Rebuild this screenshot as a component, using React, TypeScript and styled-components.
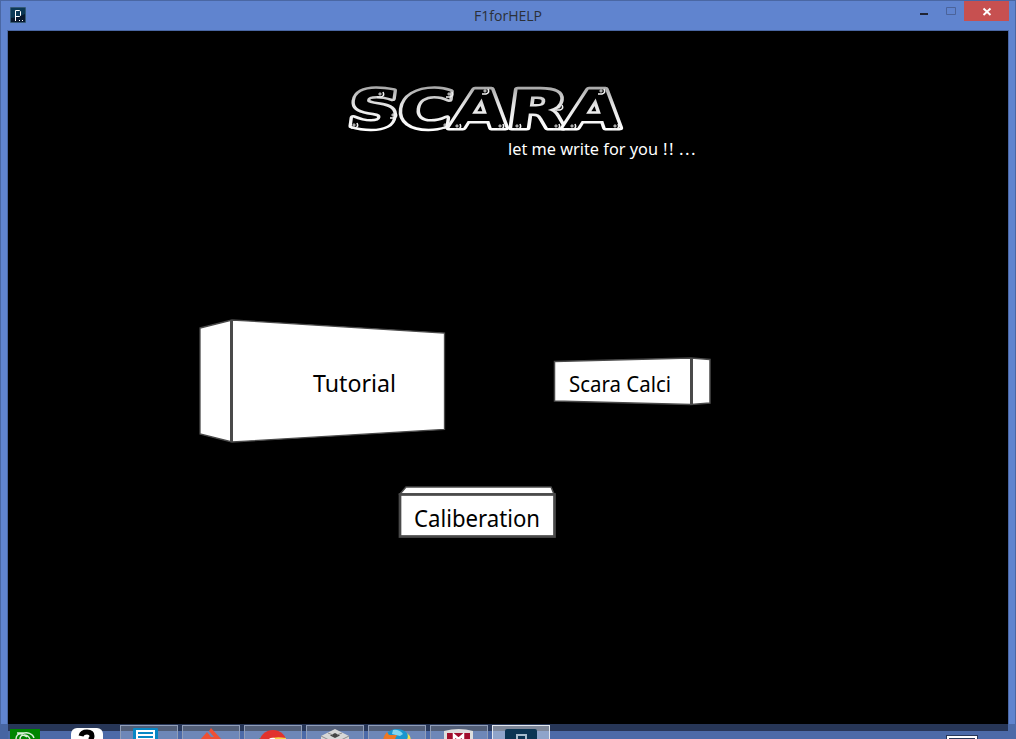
import React from 'react';
import styled, { createGlobalStyle } from 'styled-components';

const GlobalStyle = createGlobalStyle`
  * { box-sizing: border-box; }
  html, body { margin: 0; padding: 0; overflow: hidden; background: #000; }
`;

const Desktop = styled.div`
  position: relative;
  width: 1016px;
  height: 739px;
  overflow: hidden;
`;

const Window = styled.main`
  display: flex;
  flex-direction: column;
  width: 1016px;
  height: 739px;
  padding: 0 7px;
  background: #6084cf;
  border: 1px solid #4a67a3;
  border-bottom: 0;
`;

const TitleBar = styled.header`
  display: grid;
  grid-template-columns: 150px 1fr 150px;
  height: 29px;
  flex: none;
`;

const AppIcon = styled.svg`
  display: block;
  margin: 6px 0 0 2px;
`;

const Title = styled.h1`
  margin: 0;
  padding-top: 3px;
  font-weight: 400;
  svg { display: block; margin: 0 auto; }
`;

const Controls = styled.div`
  display: flex;
  justify-content: flex-end;
  margin-right: -1px;
`;

const ControlButton = styled.button<{ $w: number; $close?: boolean }>`
  width: ${p => p.$w}px;
  height: 20px;
  padding: 0;
  border: 0;
  background: ${p => (p.$close ? '#c75050' : 'transparent')};
  svg { display: block; }
`;

const Canvas = styled.section`
  position: relative;
  width: 1002px;
  height: 694px;
  margin-left: -1px;
  flex: none;
  background: #000;
  border: 1px solid #4a67a3;
  border-bottom: 0;
`;

const Node = styled.div<{ $x: number; $y: number }>`
  position: absolute;
  left: ${p => p.$x - 8}px;
  top: ${p => p.$y - 31}px;
  svg { display: block; overflow: visible; }
`;

const Label = styled.text<{ $title?: boolean }>`
  font-family: ${p => (p.$title ? "'Open Sans', sans-serif" : "'Noto Sans', 'DejaVu Sans', sans-serif")};
`;

const LogoText = styled.text`
  font-family: 'DejaVu Sans', sans-serif;
  font-weight: 700;
  font-size: 53px;
  fill: #000;
  stroke: url(#chrome);
  stroke-width: 5px;
  stroke-linejoin: round;
  paint-order: stroke;
`;

const Taskbar = styled.footer`
  position: absolute;
  left: 0;
  right: 0;
  bottom: 0;
  height: 15px;
  display: flex;
  gap: 4px;
  padding: 1px 0 0 8px;
  background: linear-gradient(#273657 0 7px, #4c6aa8 7px);
  box-shadow: inset 8px 0 #4765a2, inset -8px 0 #4c6aa8;
`;

const Task = styled.div<{ $active?: boolean }>`
  width: 58px;
  height: 14px;
  flex: none;
  overflow: hidden;
  border: 1px solid ${p => (p.$active ? '#e2e7ef' : '#919eb8')};
  border-bottom: 0;
  background: ${p => (p.$active
    ? 'linear-gradient(#7d8698 0 5px, #8fa4ca 5px)'
    : 'linear-gradient(#525e77 0 5px, #6e87b8 5px)')};
  svg { display: block; margin: 0 auto; }
`;

const Pinned = styled.div<{ $w: number }>`
  width: ${p => p.$w}px;
  height: 14px;
  flex: none;
  overflow: hidden;
  svg { display: block; }
`;

const Tray = styled.div`
  margin: 11px 39px 0 auto;
  width: 30px;
  height: 5px;
  border: 2px solid #fff;
  outline: 1px solid #273657;
  background: #273657;
`;

/* Centre points of the bolts at the open ends of the logo's pipes. */
const BOLTS = [
  [380, 94], [393, 115], [354, 125], [449, 94], [445, 125],
  [457, 126], [485, 91], [500, 126], [517, 126], [559, 107],
  [556, 126], [572, 126], [601, 91], [615, 126],
];

function Logo() {
  return (
    <svg width="290" height="56" viewBox="340 80 290 56" role="img" aria-label="SCARA">
      <defs>
        <linearGradient id="chrome" gradientUnits="userSpaceOnUse" x1="0" y1="-40" x2="0" y2="2">
          <stop offset="0" stopColor="#aaa" />
          <stop offset="0.4" stopColor="#e2e2e2" />
          <stop offset="1" stopColor="#fff" />
        </linearGradient>
      </defs>
      <g transform="translate(347 127.500) skewX(-8)">
        <LogoText y="0">
          <tspan x="-1" textLength="51" lengthAdjust="spacingAndGlyphs">S</tspan>
          <tspan x="49" textLength="54" lengthAdjust="spacingAndGlyphs">C</tspan>
          <tspan x="102" textLength="57" lengthAdjust="spacingAndGlyphs">A</tspan>
          <tspan x="158" textLength="60" lengthAdjust="spacingAndGlyphs">R</tspan>
          <tspan x="216" textLength="57" lengthAdjust="spacingAndGlyphs">A</tspan>
        </LogoText>
      </g>
      {BOLTS.map(([x, y]) => (
        <g key={`${x}-${y}`} fill="none" stroke="#f2f2f2">
          <path d={`M${x + 3} ${y - 2}q2 4-2 5l-4 0`} strokeWidth="1.600" />
          <circle cx={x} cy={y} r="1.100" strokeWidth="1" />
        </g>
      ))}
    </svg>
  );
}

interface WordProps { text: string; width: number; height: number; size: number; color: string; base: number; title?: boolean }

function Word({ text, width, height, size, color, base, title }: WordProps) {
  return (
    <svg width={width} height={height} overflow="visible">
      <Label $title={title} x="0" y={base} fontSize={size} fill={color} textLength={width} lengthAdjust="spacingAndGlyphs">{text}</Label>
    </svg>
  );
}

export default function App() {
  return (
    <Desktop>
      <GlobalStyle />
      <Window>
        <TitleBar>
          <AppIcon width="16" height="17" viewBox="0 0 16 17">
            <rect width="16" height="16" rx="1" fill="#345875" />
            <rect x="1" y="1" width="14" height="14" fill="#08182e" />
            <path d="M1 1h14v6L8 10l-7 1z" fill="#0b3855" />
            <path d="M5.500 14V3.500h4l1 1v4l-1 1h-4" fill="none" stroke="#fff" />
            <path d="M9 13.500h1M12 13.500h1" stroke="#fff" />
          </AppIcon>
          <Title><Word text="F1forHELP" width={68} height={22} size={14.5} base={17} color="#2b3038" title /></Title>
          <Controls>
            <ControlButton $w={27} aria-label="Minimize">
              <svg width="27" height="20"><rect x="8" y="12" width="8" height="2" fill="#202433" /></svg>
            </ControlButton>
            <ControlButton $w={25} aria-label="Maximize">
              <svg width="25" height="20"><path d="M7.500 6.500h9v7h-9z" fill="none" stroke="#4b639a" /></svg>
            </ControlButton>
            <ControlButton $w={45} $close aria-label="Close">
              <svg width="45" height="20"><path d="M19.500 7.500l7 6.500M26.500 7.500l-7 6.500" stroke="#fff" strokeWidth="1.900" /></svg>
            </ControlButton>
          </Controls>
        </TitleBar>

        <Canvas>
          <Node $x={340} $y={80}><Logo /></Node>
          <Node $x={508} $y={139}>
            <svg width="190" height="22">
              <Label y="16" fontSize="17" fill="#fff">
                <tspan x="0" textLength="150" lengthAdjust="spacingAndGlyphs">let me write for you</tspan>
                <tspan x="155 161">!!</tspan>
                <tspan x="171 177 183">...</tspan>
              </Label>
            </svg>
          </Node>

          <Node $x={198} $y={318}>
            <svg width="250" height="127" fill="#fff" stroke="#4a4a4a">
              <path d="M2 10L34 2l212.500 13v96.500L34 124 2 116z" strokeWidth="1.300" />
              <path d="M33.500 2v122" strokeWidth="3" />
            </svg>
          </Node>
          <Node $x={313} $y={370}>
            <Word text="Tutorial" width={83} height={26} size={24} base={22.4} color="#000" />
          </Node>

          <Node $x={553} $y={356}>
            <svg width="160" height="50" fill="#fff" stroke="#4a4a4a">
              <path d="M1.500 5.500L138 2l19 1.500V47l-19 1.500L1.500 45z" strokeWidth="1.500" />
              <path d="M138.500 2v46" strokeWidth="3" />
            </svg>
          </Node>
          <Node $x={569} $y={370}>
            <Word text="Scara Calci" width={102} height={26} size={22.5} base={21.6} color="#000" />
          </Node>

          <Node $x={398} $y={485}>
            <svg width="160" height="54" fill="#fff" stroke="#4a4a4a">
              <path d="M2 9l6-7h145l3 7z" strokeWidth="1.500" />
              <rect x="2" y="9.500" width="154.500" height="42" strokeWidth="2.700" />
            </svg>
          </Node>
          <Node $x={414} $y={505}>
            <Word text="Caliberation" width={126} height={26} size={23} base={21.5} color="#000" />
          </Node>
        </Canvas>
      </Window>

      <Taskbar>
        <Pinned $w={58}>
          <svg width="58" height="14">
            <rect x="2" y="4" width="30" height="12" fill="#008500" />
            <path d="M8 14c0-3 2-6 6-5 5-3 11 0 12 4M12 14c0-4 4-5 7-2M16 10c4 0 5 2 6 4M9 8h7" fill="none" stroke="#d9efd9" strokeWidth="1.400" />
          </svg>
        </Pinned>
        <Pinned $w={46}>
          <svg width="46" height="14">
            <rect x="1" y="3" width="32" height="20" rx="6" fill="#fff" />
            <path d="M11 11q1-4 6-4 5 0 5 4 0 2-2 4" fill="none" stroke="#000" strokeWidth="5" />
          </svg>
        </Pinned>
        <Task>
          <svg width="56" height="14">
            <rect x="12" y="2" width="25" height="16" rx="1" fill="#0787c5" />
            <path d="M15 4h19v10H15z" fill="#fff" />
            <path d="M17 7h15M17 11h15" stroke="#0787c5" strokeWidth="2" />
          </svg>
        </Task>
        <Task>
          <svg width="56" height="14">
            <path d="M28 2l12 13H16l8-9 4 5h3l-5-6z" fill="#f05033" />
          </svg>
        </Task>
        <Task>
          <svg width="56" height="14">
            <circle cx="28" cy="18" r="14" fill="#e2332d" />
            <path d="M14 18V12l7 6z" fill="#34a348" />
            <path d="M23 14q5-4 18-2v3H23z" fill="#f7d84b" />
            <path d="M23 14q2-3 7-2l-1 3h-6z" fill="#fff" />
          </svg>
        </Task>
        <Task>
          <svg width="56" height="14">
            <path d="M28 3l14 7v5H14v-5z" fill="#d7d7d7" />
            <path d="M28 7l5 2.500-5 2.500-5-2.500z" fill="#444" />
            <path d="M21 7l5 2M35 7l-5 2M14 10l8 4M42 10l-8 4" stroke="#8d8d8d" />
          </svg>
        </Task>
        <Task>
          <svg width="56" height="14">
            <circle cx="28" cy="17" r="14" fill="#1896cf" />
            <path d="M24 4q6-1 10 4l-3 2-8-2z" fill="#83d6ed" />
            <path d="M14 15q0-5 4-9l2 3 8 0-3 6z" fill="#ee7722" />
            <path d="M37 15q3-4 1-8 4 3 4 8z" fill="#f4dc4b" />
          </svg>
        </Task>
        <Task>
          <svg width="56" height="14">
            <path d="M13 5q15-4 29 0v10H13z" fill="#dedede" />
            <path d="M16 7h23v8H16z" fill="#a10d2d" />
            <path d="M23 15V9l4.500 4L32 9v6" fill="none" stroke="#fff" strokeWidth="2.500" />
          </svg>
        </Task>
        <Task $active>
          <svg width="56" height="14">
            <rect x="12" y="3" width="32" height="20" rx="2" fill="#0b3553" />
            <path d="M24 15V9h9v6" fill="none" stroke="#a6bccd" strokeWidth="2" />
          </svg>
        </Task>
        <Tray />
      </Taskbar>
    </Desktop>
  );
}
